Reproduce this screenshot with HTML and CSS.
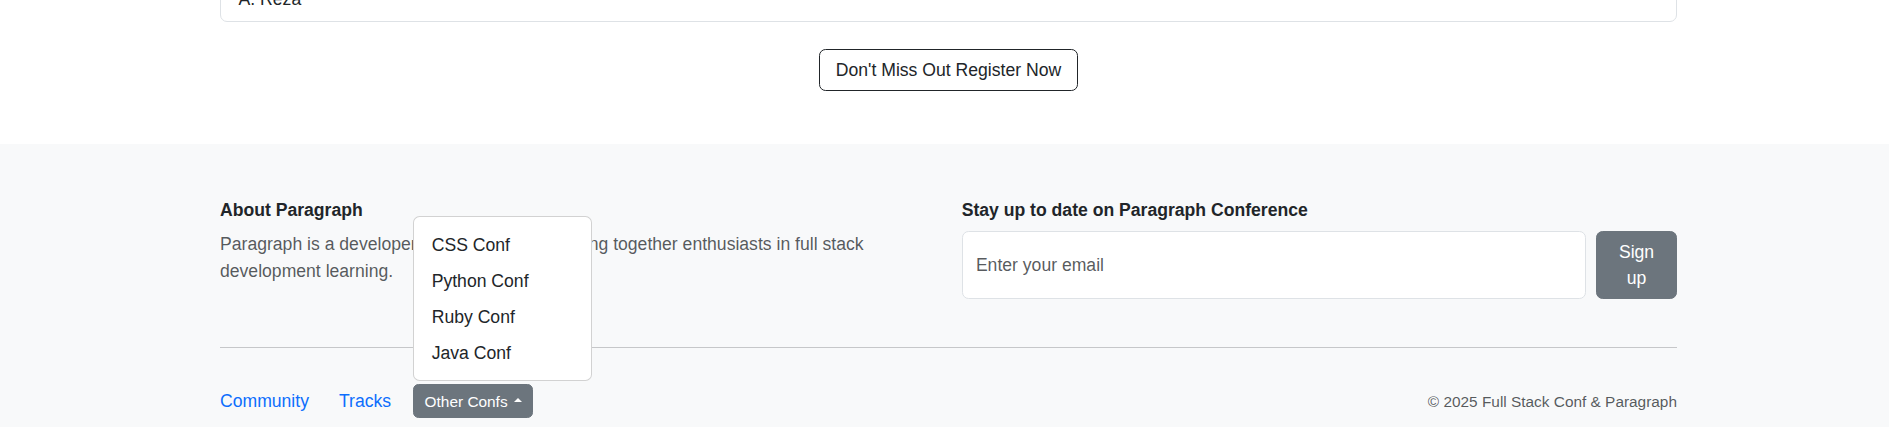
FILE: index.html
```html
<!DOCTYPE html>
<html lang="en">
<head>
<meta charset="utf-8">
<title>Paragraph Conference</title>
<link rel="stylesheet" href="styles.css">
</head>
<body>
<section class="cta-section">
  <div class="container">
    <ul class="review-list">
      <li class="review-item">A. Reza</li>
    </ul>
    <div class="cta-wrap">
      <button class="btn-outline" type="button">Don't Miss Out Register Now</button>
    </div>
  </div>
</section>

<footer class="site-footer">
  <div class="container">
    <div class="footer-cols">
      <div class="footer-col">
        <h5 class="footer-heading">About Paragraph</h5>
        <p class="footer-text">Paragraph is a developer community hub bringing together enthusiasts in full stack development learning.</p>
      </div>
      <form class="footer-col">
        <h5 class="footer-heading">Stay up to date on Paragraph Conference</h5>
        <div class="signup-row">
          <input class="email-input" type="text" placeholder="Enter your email">
          <button class="btn-signup" type="button">Sign up</button>
        </div>
      </form>
    </div>
    <div class="footer-bottom">
      <nav class="footer-nav">
        <a class="footer-link footer-link-first" href="#">Community</a>
        <a class="footer-link" href="#">Tracks</a>
        <div class="dropup">
          <button class="btn-other" type="button">Other Confs<span class="caret"></span></button>
          <ul class="dropdown-menu">
            <li><a class="dropdown-item" href="#">CSS Conf</a></li>
            <li><a class="dropdown-item" href="#">Python Conf</a></li>
            <li><a class="dropdown-item" href="#">Ruby Conf</a></li>
            <li><a class="dropdown-item" href="#">Java Conf</a></li>
          </ul>
        </div>
      </nav>
      <p class="copyright">© 2025 Full Stack Conf &amp; Paragraph</p>
    </div>
  </div>
</footer>
</body>
</html>
```

FILE: styles.css
```css
*, *::before, *::after { box-sizing: border-box; }

html, body {
  margin: 0;
  height: 427px;
  overflow: hidden;
}

body {
  font-family: "Liberation Sans", Arial, sans-serif;
  font-size: 17.6px;
  line-height: 1.5;
  color: #212529;
  background: #fff;
}

.container {
  width: 1457px;
  margin-left: 220px;
}

/* top section */
.cta-section {
  padding-bottom: 53px;
}

.review-list {
  list-style: none;
  margin: -24px 0 0;
  padding: 0;
}

.review-item {
  border: 1px solid #dee2e6;
  border-radius: 0 0 7px 7px;
  padding: 8.8px 17.6px;
  line-height: 26.4px;
}

.cta-wrap {
  display: flex;
  justify-content: center;
  margin-top: 27px;
}

.btn-outline {
  font: inherit;
  line-height: 26.4px;
  color: #212529;
  background: transparent;
  border: 1px solid #212529;
  border-radius: 6.6px;
  padding: 7px 15.6px;
}

/* footer */
.site-footer {
  background: #f8f9fa;
  padding-top: 56px;
  height: 400px;
}

.footer-cols {
  display: grid;
  grid-template-columns: 1fr 1fr;
  column-gap: 26.4px;
}

.footer-col { margin: 0; }

.footer-heading {
  margin: 0 0 9.8px;
  font-size: 17.6px;
  font-weight: 700;
  line-height: 1.2;
  color: #212529;
}

.footer-text {
  margin: 0;
  line-height: 26.4px;
  color: rgba(33, 37, 41, 0.75);
}

.signup-row {
  display: flex;
  gap: 10px;
}

.email-input {
  flex: 1;
  min-width: 0;
  font: inherit;
  color: #212529;
  background: #fff;
  border: 1px solid #dee2e6;
  border-radius: 6.6px;
  padding: 6.6px 13.2px;
  outline: none;
}

.email-input::placeholder { color: rgba(33, 37, 41, 0.75); }

.btn-signup {
  width: 81px;
  flex: none;
  font: inherit;
  line-height: 26.4px;
  color: #fff;
  background: #6c757d;
  border: 1px solid #6c757d;
  border-radius: 6.6px;
  padding: 6.6px 13.2px;
  text-align: center;
}

.footer-bottom {
  margin-top: 48px;
  border-top: 1px solid #c6c7c9;
  padding-top: 36px;
  display: flex;
  justify-content: space-between;
  align-items: center;
}

.footer-nav {
  display: flex;
  align-items: center;
  gap: 22px;
}

.footer-link {
  color: #0d6efd;
  text-decoration: none;
  line-height: 26.4px;
}

.footer-link-first { margin-right: 8px; }

.dropup { position: relative; }

.btn-other {
  display: flex;
  align-items: center;
  font-family: inherit;
  font-size: 15.4px;
  line-height: 23.1px;
  color: #fff;
  background: #6c757d;
  border: 1px solid #6c757d;
  border-radius: 5.5px;
  padding: 4.4px 10.5px;
}

.caret {
  display: inline-block;
  margin-left: 6px;
  width: 0;
  height: 0;
  border-left: 4.6px solid transparent;
  border-right: 4.6px solid transparent;
  border-bottom: 4.6px solid #fff;
  margin-bottom: 2px;
}

.dropdown-menu {
  position: absolute;
  left: 0;
  bottom: calc(100% + 3px);
  width: 179px;
  margin: 0;
  padding: 10.8px 0 8.8px;
  list-style: none;
  background: #fff;
  border: 1px solid rgba(0, 0, 0, 0.175);
  border-radius: 6.6px;
  z-index: 10;
}

.dropdown-item {
  display: block;
  padding: 4.8px 17.6px;
  line-height: 26.4px;
  color: #212529;
  text-decoration: none;
  white-space: nowrap;
}

.copyright {
  margin: 0;
  font-size: 15.4px;
  line-height: 23.1px;
  color: rgba(33, 37, 41, 0.75);
}
```
